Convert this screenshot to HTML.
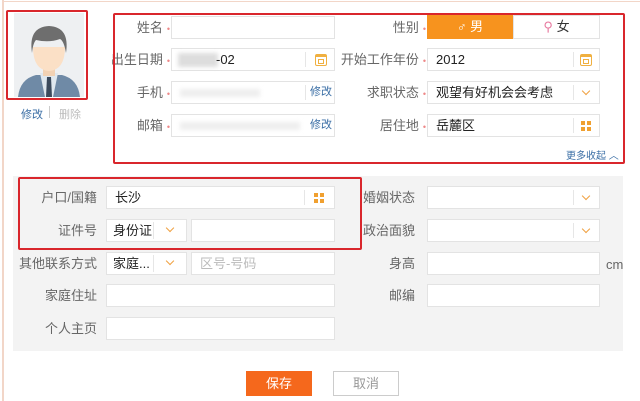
<!DOCTYPE html>
<html><head><meta charset="utf-8"><style>
*{box-sizing:border-box;margin:0;padding:0}
body{width:640px;height:401px;background:#fff;position:relative;overflow:hidden;font-family:"Liberation Sans","Noto Sans CJK SC",sans-serif;font-size:13px;color:#333}
.a{position:absolute}
.inp{position:absolute;background:#fff;border:1px solid #e3e3e3;height:23px;line-height:21px;padding-left:8px;font-size:13px;color:#222}
.lbl{position:absolute;text-align:right;color:#666;font-size:13px;line-height:23px}
.star{font-size:9px;margin-left:4px;color:#e88}
.sep{position:absolute;top:3px;bottom:3px;width:1px;background:#e6e6e6}
.red{position:absolute;border:2px solid #d9262c;border-radius:2px}
.chev{position:absolute;width:6px;height:6px;border-right:1.5px solid #f0a040;border-bottom:1.5px solid #f0a040;transform:rotate(45deg)}
.grid{position:absolute;width:10px;height:10px;background:
linear-gradient(#fff,#fff) 4px 0/2px 10px no-repeat,linear-gradient(#fff,#fff) 0 4px/10px 2px no-repeat,#f0a030}
.cal{position:absolute;width:12px;height:12px;border:1.5px solid #f0b040;border-top-width:3px;border-radius:2px}
.cal:after{content:"";position:absolute;left:2px;top:2px;width:4px;height:3px;border:1px solid #f0b040}
</style></head><body>
<div class="a" style="left:2px;top:0;width:2px;height:401px;background:#f2d6c8"></div>
<div class="a" style="left:2px;top:1px;width:638px;height:1px;background:#f2d6c8"></div>

<div class="a" style="left:14px;top:13px;width:70px;height:84px;background:#eef0f2;overflow:hidden">
<svg width="70" height="84" viewBox="0 0 70 84">
<path d="M4 84 Q6 66 22 62 L48 62 Q64 66 66 84Z" fill="#6f8aa6"/>
<path d="M26 60 L44 60 L39 84 L31 84Z" fill="#dfe8ef"/>
<path d="M33 64 L37 64 L38 84 L32 84Z" fill="#3b4a5c"/>
<rect x="29" y="50" width="12" height="13" fill="#f2d2b4"/>
<path d="M19 34 Q19 57 35 58 Q51 57 51 34Z" fill="#fbe0c6"/>
<path d="M18 40 Q14 14 35 13 Q56 14 52 40 Q50 28 46 26 Q35 30 22 27 Q19 30 18 40Z" fill="#6e6e6e"/>
</svg></div>
<div class="red" style="left:6px;top:10px;width:82px;height:90px"></div>
<div class="a" style="left:21px;top:106px;color:#3a6ea5;font-size:11px">修改</div>
<div class="a" style="left:49px;top:106px;width:1px;height:12px;background:#ccc"></div>
<div class="a" style="left:59px;top:106px;color:#bbb;font-size:11px">删除</div>

<div class="lbl" style="left:100px;top:16px;width:70px">姓名<span class="star">•</span></div>
<div class="inp" style="left:171px;top:16px;width:164px"></div>
<div class="lbl" style="left:100px;top:48px;width:70px">出生日期<span class="star">•</span></div>
<div class="inp" style="left:171px;top:48px;width:164px"><span class="a" style="left:6px;top:4px;width:40px;height:14px;background:#ddd;filter:blur(2px)"></span><span class="a" style="left:44px;top:0">-02</span><div class="sep" style="left:133px"></div><div class="cal" style="left:143px;top:5px"></div></div>
<div class="lbl" style="left:100px;top:81px;width:70px">手机<span class="star">•</span></div>
<div class="inp" style="left:171px;top:81px;width:164px"><span class="a" style="left:8px;top:7px;width:80px;height:8px;background:#eee;filter:blur(2px)"></span><div class="sep" style="left:133px"></div><span class="a" style="left:138px;top:0;color:#3a6ea5;font-size:11px">修改</span></div>
<div class="lbl" style="left:100px;top:114px;width:70px">邮箱<span class="star">•</span></div>
<div class="inp" style="left:171px;top:114px;width:164px"><span class="a" style="left:8px;top:7px;width:120px;height:8px;background:#eee;filter:blur(2px)"></span><span class="a" style="left:138px;top:0;color:#3a6ea5;font-size:11px">修改</span></div>

<div class="lbl" style="left:330px;top:16px;width:96px">性别<span class="star">•</span></div>
<div class="a" style="left:427px;top:15px;width:86px;height:24px;background:#f7931e;color:#fff;text-align:center;line-height:24px"><b>♂</b> 男</div>
<div class="a" style="left:513px;top:15px;width:87px;height:24px;border:1px solid #e3e3e3;text-align:center;line-height:22px"><span style="color:#e87aa0">⚲</span> 女</div>
<div class="lbl" style="left:330px;top:48px;width:96px">开始工作年份<span class="star">•</span></div>
<div class="inp" style="left:427px;top:48px;width:173px">2012<div class="sep" style="left:145px"></div><div class="cal" style="left:152px;top:5px"></div></div>
<div class="lbl" style="left:330px;top:81px;width:96px">求职状态<span class="star">•</span></div>
<div class="inp" style="left:427px;top:81px;width:173px">观望有好机会会考虑<div class="sep" style="left:145px"></div><div class="chev" style="left:155px;top:6px"></div></div>
<div class="lbl" style="left:330px;top:114px;width:96px">居住地<span class="star">•</span></div>
<div class="inp" style="left:427px;top:114px;width:173px">岳麓区<div class="sep" style="left:145px"></div><div class="grid" style="left:153px;top:6px"></div></div>
<div class="a" style="left:566px;top:147px;color:#3a6ea5;font-size:10px">更多收起 ︿</div>
<div class="red" style="left:113px;top:13px;width:512px;height:151px"></div>

<div class="a" style="left:13px;top:176px;width:610px;height:175px;background:#f3f3f3"></div>
<div class="lbl" style="left:20px;top:186px;width:77px">户口/国籍</div>
<div class="inp" style="left:106px;top:186px;width:229px">长沙<div class="sep" style="left:197px"></div><div class="grid" style="left:207px;top:6px"></div></div>
<div class="lbl" style="left:20px;top:219px;width:77px">证件号</div>
<div class="a" style="left:106px;top:219px;width:81px;height:23px;background:#fff;border:1px solid #e3e3e3"></div>
<div class="a" style="left:113px;top:219px;line-height:23px;color:#222">身份证</div>
<div class="sep" style="left:153px;top:222px;height:17px"></div>
<div class="chev" style="left:167px;top:225px"></div>
<div class="inp" style="left:191px;top:219px;width:144px"></div>
<div class="red" style="left:18px;top:177px;width:344px;height:73px"></div>

<div class="lbl" style="left:14px;top:252px;width:83px">其他联系方式</div>
<div class="a" style="left:106px;top:252px;width:81px;height:23px;background:#fff;border:1px solid #e3e3e3"></div>
<div class="a" style="left:113px;top:252px;line-height:23px;color:#222">家庭...</div>
<div class="sep" style="left:153px;top:255px;height:17px"></div>
<div class="chev" style="left:167px;top:258px"></div>
<div class="inp" style="left:191px;top:252px;width:144px;color:#bbb">区号-号码</div>
<div class="lbl" style="left:20px;top:284px;width:77px">家庭住址</div>
<div class="inp" style="left:106px;top:284px;width:229px"></div>
<div class="lbl" style="left:20px;top:317px;width:77px">个人主页</div>
<div class="inp" style="left:106px;top:317px;width:229px"></div>

<div class="lbl" style="left:338px;top:186px;width:77px">婚姻状态</div>
<div class="inp" style="left:427px;top:186px;width:173px"><div class="sep" style="left:145px"></div><div class="chev" style="left:155px;top:6px"></div></div>
<div class="lbl" style="left:338px;top:219px;width:77px">政治面貌</div>
<div class="inp" style="left:427px;top:219px;width:173px"><div class="sep" style="left:145px"></div><div class="chev" style="left:155px;top:6px"></div></div>
<div class="lbl" style="left:338px;top:252px;width:77px">身高</div>
<div class="inp" style="left:427px;top:252px;width:173px"></div>
<div class="a" style="left:606px;top:257px;color:#666">cm</div>
<div class="lbl" style="left:338px;top:284px;width:77px">邮编</div>
<div class="inp" style="left:427px;top:284px;width:173px"></div>

<div class="a" style="left:246px;top:371px;width:66px;height:25px;background:#f5681c;color:#fff;text-align:center;line-height:25px">保存</div>
<div class="a" style="left:333px;top:371px;width:66px;height:25px;border:1px solid #ccc;color:#999;text-align:center;line-height:23px">取消</div>
</body></html>
